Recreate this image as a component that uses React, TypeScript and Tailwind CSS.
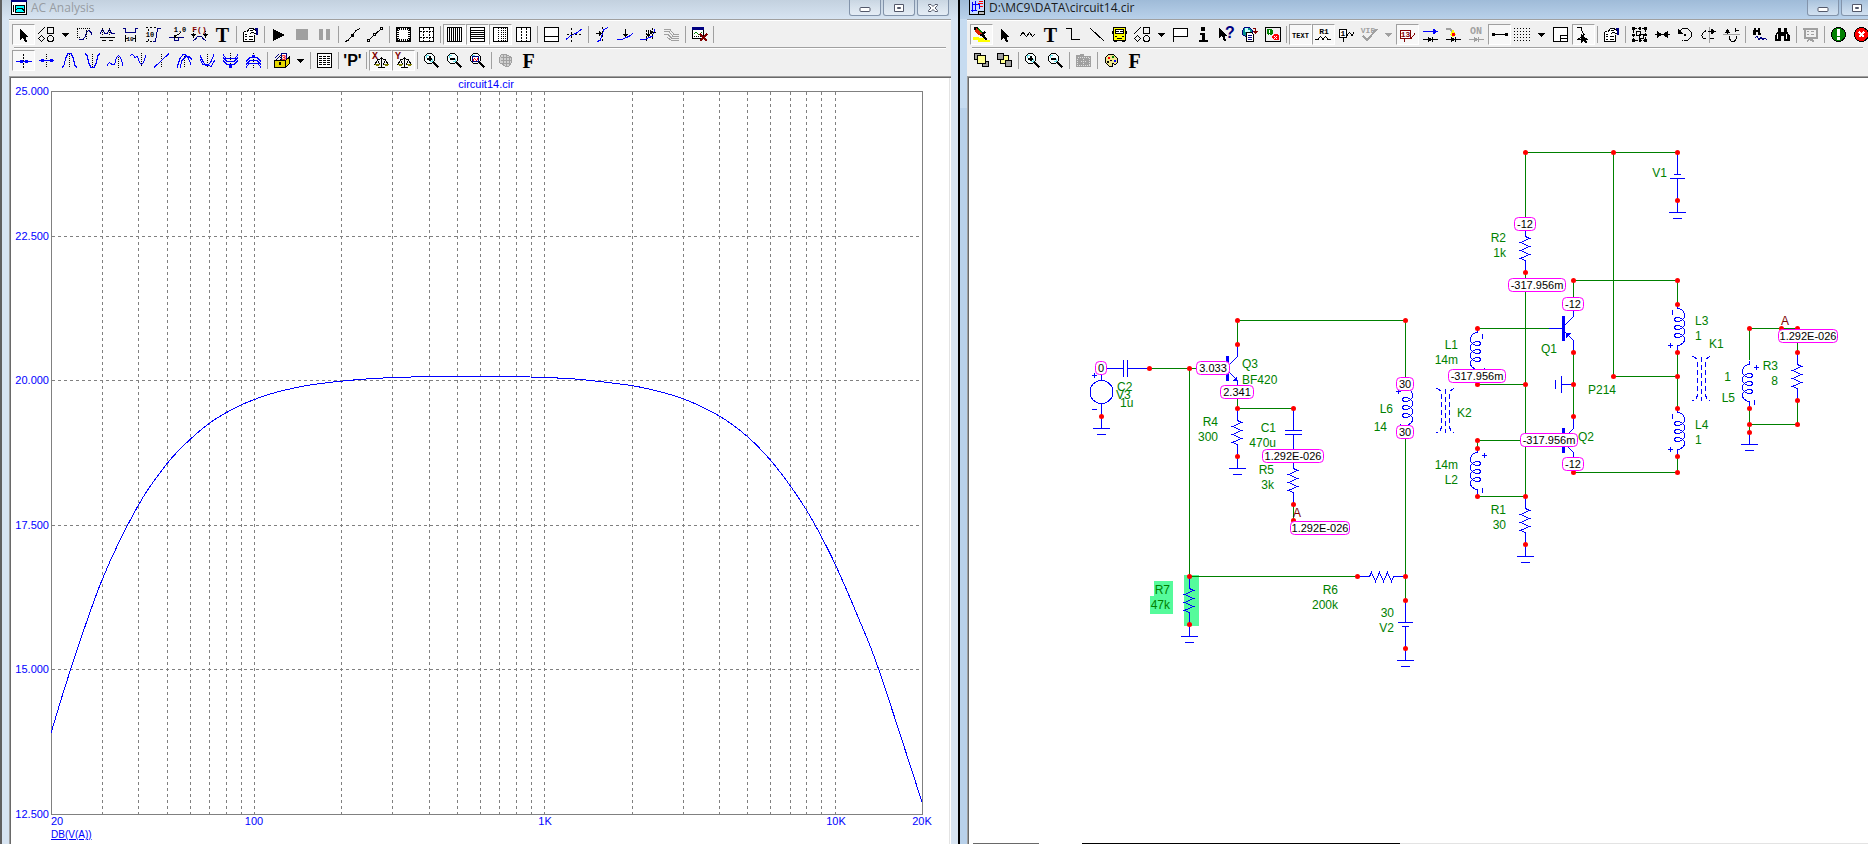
import React from 'react'

const BLUE = '#0000ff'
const NAVY = '#000080'
const GRAY = '#a0a0a0'
const RED = '#800000'
const GREEN = '#008000'

type LineProps = { d: string; c?: string; w?: number; dash?: string; fill?: string }

function L({ d, c = '#000', w = 1, dash, fill = 'none' }: LineProps) {
  return <path d={d} stroke={c} strokeWidth={w} strokeDasharray={dash} fill={fill} />
}

function F({ d, c = '#000' }: { d: string; c?: string }) {
  return <path d={d} fill={c} />
}

function Tiny({ x, y, size = 7, c = '#000', children }: { x: number; y: number; size?: number; c?: string; children: string }) {
  return (
    <text x={x} y={y} fontSize={size} fill={c} fontWeight="bold" fontFamily="'Liberation Mono', monospace" textAnchor="middle">
      {children}
    </text>
  )
}

const diode = (c: string) => (
  <>
    <L c={c} d="M1 13.5H16" />
    <F c={c} d="M6 10.5L10 13.5L6 16.5ZM10 11H11V16H10Z" />
  </>
)

const magnifier = (
  <>
    <L d="M4.5 1.5H8.5L11.5 4.5V8.5L8.5 11.5H4.5L1.5 8.5V4.5Z" fill="#f8ffff" />
    <L d="M2 4L4 2M9 2L11 4M2 9L4 11M9 11L11 9" />
    <L d="M3 3.5H6M3.5 3V6M9.5 7V10M7 9.5H10" c="#60e0e8" />
    <L d="M10.5 10.5L15.5 15.5" w={2} />
  </>
)

const clipboard = (
  <>
    <L d="M1.5 5.5V15.5H12.5V9M1.5 5.5H4" fill="#fff" />
    <L d="M3 8.5H5M7 10.5H11M3 10.5H5M3 13.5H5M7 13.5H11" />
    <L d="M4.5 6.5L7.5 2.5H10.5L14 4.5V7.5L9.5 6.5L7.5 8.5" fill="#fff" />
    <L d="M8 4.5H11M9 6.5H12" />
    <F d="M13 2H16V9H14V4H13Z" c={NAVY} />
  </>
)

const scales = (letter: string) => (
  <>
    <Tiny x={3} y={7} size={10} c={RED}>{letter}</Tiny>
    <L d="M9.5 5V15M6 15.5H13M5 8.5L9.5 6.5L14 8.5M5.5 8L3 12H7.5ZM13.5 8L11.5 12H16Z" />
    <F d="M2 12H8L6 14H4ZM11 12H17L15 14H13Z" c="#808000" />
  </>
)

const plotFrame = <L d="M1.5 1.5H15.5V15.5H1.5Z" fill="#fff" />

const icons: Record<string, React.ReactNode> = {
  arrow: <F d="M5 3V14L8 11.5L10 16H12L10.5 11H14Z" />,
  shapes: (
    <>
      <L d="M0 8L7 1M9.5 1.5H15.5V7.5H9.5ZM3.5 9.5L6.5 12.5L3.5 15.5L0.5 12.5Z" />
      <circle cx="12.5" cy="12.5" r="3" fill="none" stroke="#000" />
    </>
  ),
  scope: (
    <>
      <L d="M1 2.5H15M1.5 3V12M1 11.5H5" dash="1 1" />
      <L d="M3 13.5H7L9.5 10L11 5.5L13 4.5L15 6.5L16 9" c={NAVY} />
      <L d="M10.5 4V14" dash="1 1" />
    </>
  ),
  equals: (
    <>
      <L d="M1 8L3.5 3.5L6 7.5L8 8L10.5 3.5L12.5 7.5H16" c={NAVY} />
      <L d="M3.5 2V10M10.5 2V10" dash="1 1" />
      <L d="M1 11.5H16M3 14.5H7M10 14.5H14" />
    </>
  ),
  width: (
    <>
      <L d="M1 2.5H3.5V6.5H13.5V2.5H16" c={NAVY} />
      <L d="M3.5 9V16M13.5 9V16M4 12.5H6M11 12.5H13" />
      <Tiny x={8} y={15} size={6}>10</Tiny>
    </>
  ),
  height: (
    <>
      <L d="M8 15.5H10.5L12.5 2.5H16" c={NAVY} />
      <L d="M1 1.5H12M1 15.5H8" dash="2 2" />
      <L d="M3.5 3V5M3.5 13V15" />
      <Tiny x={5} y={11} size={7}>10</Tiny>
    </>
  ),
  slope: (
    <>
      <L d="M1 11.5H6.5V14.5H10.5V11.5H16" c={NAVY} />
      <L d="M6 11L13 6.5M6 8.5V11.5H10" />
      <Tiny x={12} y={6} size={7}>1.0</Tiny>
    </>
  ),
  func: (
    <>
      <Tiny x={8.5} y={6} size={8} c={RED}>F()</Tiny>
      <L d="M2 15L4.5 13L6.5 10.5H10.5L12.5 13L15 15" c={NAVY} />
      <L d="M2.5 5V12M14.5 5V12" dash="1 1" />
      <F d="M0 8H5L2.5 11ZM12 8H17L14.5 11Z" />
    </>
  ),
  props: clipboard,
  play: <F d="M3 3L15 9L3 15Z" />,
  stop: <F d="M3 3H15V14H3Z" c={GRAY} />,
  pause: <F d="M3 3H7V14H3ZM10 3H14V14H10Z" c={GRAY} />,
  line: (
    <>
      <L d="M1 15.5L4 14.5L12 4.5L16 2.5" />
      <F d="M7 7.5H10V10.5H7Z" />
    </>
  ),
  linePts: (
    <>
      <L d="M1.5 14.5L7.5 8.5L15 2.5" />
      <L d="M0.5 13.5H2.5V15.5H0.5ZM6.5 7.5H8.5V9.5H6.5ZM13.5 1.5H15.5V3.5H13.5Z" fill="#fff" />
    </>
  ),
  ruler: (
    <>
      <L d="M1.5 1.5H15.5V15.5H1.5Z" fill="#fff" />
      <L d="M3 2V15M14 2V15M2 3H15M2 14H15" dash="1 1" w={2} />
    </>
  ),
  plus: (
    <>
      {plotFrame}
      <L d="M5.5 2V15M11.5 2V15M2 5.5H15M2 11.5H15" dash="2 1" />
    </>
  ),
  vgrid: (
    <>
      {plotFrame}
      <L d="M3.5 2V15M5.5 2V15M7.5 2V15M9.5 2V15M11.5 2V15M13.5 2V15" />
    </>
  ),
  hgrid: (
    <>
      {plotFrame}
      <L d="M2 4.5H15M2 6.5H15M2 8.5H15M2 10.5H15M2 12.5H15" />
    </>
  ),
  minor: (
    <>
      {plotFrame}
      <L d="M6.5 2V15M9.5 2V15M11.5 2V15M13.5 2V15" dash="1 1" />
    </>
  ),
  thirds: (
    <>
      {plotFrame}
      <L d="M6.5 2V15M11.5 2V15" dash="2 1" />
    </>
  ),
  panes: (
    <>
      {plotFrame}
      <L d="M2 10.5H15" />
    </>
  ),
  tangent: (
    <>
      <L d="M0 13.5L6 8.5L10 7.5L16 3" c={BLUE} />
      <L d="M5.5 2V16M1 8.5H16" dash="2 2" />
    </>
  ),
  goX: (
    <>
      <L d="M3 15.5L6 14.5L10 3.5L14 1.5" c={BLUE} />
      <L d="M8.5 1V16" dash="2 2" />
      <L d="M2 7.5H8" />
      <F d="M5 5V10L8 7.5Z" />
    </>
  ),
  goY: (
    <>
      <L d="M0 13.5H5L9 11.5L12 10.5L16 7.5" c={BLUE} />
      <L d="M8.5 3V10" />
      <F d="M5.5 7.5H11.5L8.5 11Z" />
    </>
  ),
  goXY: (
    <>
      <L d="M0 13.5H5L9 11.5L12 10.5L15 3.5" c={BLUE} />
      <L d="M6.5 4V16M12.5 2V14" dash="2 1" />
      <L d="M8.5 4V10M10 6.5H16" />
      <F d="M5.5 7.5H11.5L8.5 11ZM10 4V9L13 6.5Z" />
    </>
  ),
  waves: <L c={GRAY} d="M1 3.5H7L11 8.5H16M1 5.5H6L10 10.5H16M1 8.5H5L9 12.5H16M4 11.5L9 14.5H16" />,
  noPlot: (
    <>
      <L d="M1.5 2.5H12.5V12.5H1.5Z" fill="#fff" />
      <F d="M1 1H13V4H1Z" c={NAVY} />
      <L d="M3 8L5 6L8 9L11 6" c={GREEN} />
      <L d="M3 10.5H10" c="#000" dash="1 1" />
      <L d="M9 8L16 15M16 8L9 15" c={RED} w={2} />
    </>
  ),
  cursors: (
    <>
      <L d="M8.5 2V17" dash="2 1" />
      <L d="M1 9.5H17" c={BLUE} w={1} />
      <F d="M5 8H8V11H5ZM10 8H13V11H10Z" c={BLUE} />
    </>
  ),
  nextPt: (
    <>
      <L d="M8.5 2V15" dash="1 1" />
      <L d="M1 8.5H16" c={BLUE} />
      <F d="M3 7H6V10H3ZM12 7H15V10H12Z" c={BLUE} />
    </>
  ),
  peak: (
    <>
      <L d="M8.5 2V16" dash="1 1" />
      <L d="M1 15.5L3 13.5L5 5.5L7 1.5H10L12 5.5L14 13.5L16 15.5" c={BLUE} />
    </>
  ),
  valley: (
    <>
      <L d="M8.5 2V16" dash="1 1" />
      <L d="M1 1.5L3 3.5L5 11.5L7 15.5H10L12 11.5L14 3.5L16 1.5" c={BLUE} />
    </>
  ),
  high: (
    <>
      <L d="M11.5 3V16" dash="1 1" />
      <L d="M0 13.5L2.5 10.5L5 12.5H7.5L9.5 5.5L11.5 3.5L13.5 5.5L16 13.5" c={BLUE} />
    </>
  ),
  low: (
    <>
      <L d="M11.5 1V14" dash="1 1" />
      <L d="M0 3.5L2.5 2.5L5 5.5L7.5 4.5L9.5 10.5L11.5 12.5L13.5 10.5L16 3.5" c={BLUE} />
    </>
  ),
  inflect: (
    <>
      <L d="M8.5 2V16" dash="1 1" />
      <L d="M1 15.5L8 9L16 1.5" c={BLUE} />
    </>
  ),
  topTwo: (
    <>
      <L d="M8.5 2V16" dash="1 1" />
      <L d="M1 15.5L4 6.5L7 2.5H9L12 5.5L15 12.5M4 15.5L6 8.5L10 4.5H13L16 7.5" c={BLUE} />
    </>
  ),
  botTwo: (
    <>
      <L d="M8.5 2V16" dash="1 1" />
      <L d="M1 3.5L4 9.5L7 13.5H9L12 9.5L15 2.5M1 7.5L4 12.5H9L12 14.5L16 8" c={BLUE} />
    </>
  ),
  nestDown: (
    <>
      <L d="M8.5 1V16" dash="1 1" />
      <L d="M1 2.5L4 6.5H13L16 2.5M1 5.5L5 9.5H12L16 5.5M1 8.5L5 12.5H12L16 8.5" c={BLUE} />
      <F d="M7 12H10V16H7Z" c={BLUE} />
    </>
  ),
  nestUp: (
    <>
      <L d="M8.5 1V16" dash="1 1" />
      <L d="M1 15.5L4 11.5H13L16 15.5M1 12.5L5 8.5H12L16 12.5M1 9.5L5 5.5H12L16 9.5" c={BLUE} />
      <F d="M7 3H10V6H7Z" c={BLUE} />
    </>
  ),
  box: (
    <>
      <L d="M8.5 1.5H13.5V8.5H8.5Z" c={NAVY} fill="#fff" />
      <Tiny x={11} y={8} size={8} c="#ff0000">3</Tiny>
      <L d="M2 6L6 2M4 7L8 3" c={NAVY} />
      <L d="M1.5 8.5H12.5V15.5H1.5ZM12.5 8.5L16 5.5V12L12.5 15.5" fill="#e6d800" />
      <L d="M3 7.5L7 4L8 8" c="#000" dash="1 1" />
      <F d="M6 10H8V13H6Z" />
    </>
  ),
  table: (
    <>
      <L d="M1.5 1.5H15.5V15.5H1.5Z" fill="#fff" />
      <L d="M3 4.5H14M3 6.5H14M3 8.5H14M3 10.5H14M3 12.5H14" dash="3 1" />
    </>
  ),
  scaleX: scales('X'),
  scaleY: scales('Y'),
  zoomIn: (
    <>
      {magnifier}
      <L d="M4 6.5H9M6.5 4V9" w={2} />
    </>
  ),
  zoomOut: (
    <>
      {magnifier}
      <L d="M4 6.5H9" w={2} />
    </>
  ),
  zoomPlot: (
    <>
      {magnifier}
      <L d="M3.5 4.5H9.5V9.5H3.5Z" c={NAVY} />
      <L d="M4 8.5L5.5 6.5L7.5 8.5L9 6.5" c="#ff0000" />
    </>
  ),
  globe: (
    <>
      <L d="M4.5 2.5H9.5L14.5 5.5V10.5L11.5 14.5H8.5L2.5 10.5V5.5Z" c={GRAY} fill="#d0d0d0" />
      <L d="M4 5.5H14M4 8.5H15M5 11.5H14M6.5 3V13M9.5 3V14M12.5 4V14" c={GRAY} />
    </>
  ),
  pen: (
    <>
      <F d="M0 11H6V12H11V14H17V16H5V14H0Z" c="#ffff00" />
      <F d="M1 1H4L11 8L14 13L8 10L1 4Z" />
      <L d="M3 2.5L9 8.5M2 4.5L7 8.5" c="#e02000" w={2} />
      <L d="M5 2.5L9 6.5" c={GREEN} />
      <L d="M8 10L12 6M11 11L14 14" w={2} />
    </>
  ),
  wave: <L d="M1 10L4 6.5L7.5 10.5L10.5 6.5L13.5 10.5L16 8" />,
  ortho: <L d="M1 2.5H6.5V13.5H15" />,
  diag: <L d="M2 2L16 15" />,
  bus: (
    <>
      <L d="M2.5 1.5H14.5V14.5H2.5Z" fill="#ffff00" w={1} />
      <L d="M4.5 3.5H12.5V7.5H4.5Z" fill="#fff" />
      <F d="M5 5H8V6H5ZM9 5H12V6H9ZM1 5H2V8H1ZM15 5H16V8H15ZM3 15H6V16H3ZM11 15H14V16H11Z" />
      <L d="M4 10.5H6M11 10.5H13M6 12.5H11" />
    </>
  ),
  flag: <L d="M1.5 16V2.5H15.5V10.5H2" w={1} fill="#fff" />,
  info: <F d="M6 1H10V5H6ZM5 7H10V14H13V16H4V14H7V9H5Z" />,
  help: (
    <>
      <F d="M1 2V12L4 10L6 15H8L6.5 9.5H9Z" />
      <text x="12" y="12" fontSize="16" fontWeight="bold" fill={NAVY} textAnchor="middle" fontFamily="'Liberation Sans', sans-serif">?</text>
    </>
  ),
  web: (
    <>
      <L d="M3.5 1.5H8.5L11.5 4.5V7.5L6.5 11.5L1.5 8.5V4.5Z" c={NAVY} fill="#009090" />
      <F d="M4 2H7V4H9V6H4Z" c="#c0ffff" />
      <L d="M5.5 6.5H10.5L12.5 8.5V15.5H5.5Z" fill="#fff" />
      <L d="M7 9.5H11M7 11.5H11M7 13.5H11" c={NAVY} />
      <L d="M12 2.5H14.5V6" c={RED} />
      <F d="M12 5H17L14.5 8Z" c={RED} />
    </>
  ),
  status: (
    <>
      <L d="M1.5 1.5H16.5V15.5H1.5Z" fill="#f0f0f0" />
      <F d="M3 3H7L9 4V8L7 9H4L3 8Z" c={GREEN} />
      <F d="M10 8H14L15 10V13L14 14H10L8 12V10Z" c="#ff0000" />
      <L d="M10 10L13 13M13 10L10 13" c="#fff" />
      <F d="M5 4H6V7H5ZM5 8H6V9H5Z" c="#fff" />
    </>
  ),
  text: <Tiny x={8.5} y={12} size={7}>TEXT</Tiny>,
  r1: (
    <>
      <Tiny x={9} y={8} size={8}>R1</Tiny>
      <L d="M0 13.5H3L5.5 10.5L8 13.5L10.5 10.5L13 13.5H16" />
    </>
  ),
  nodeNum: (
    <>
      <L d="M1.5 3.5H8.5V11.5H1.5ZM5.5 12V16M9 9.5L11.5 6.5L14 9.5L16 6.5" fill="#fff" />
      <Tiny x={5} y={10} size={8}>1</Tiny>
    </>
  ),
  vip: (
    <>
      <Tiny x={7} y={7} size={8} c={GRAY}>VIP</Tiny>
      <L d="M2 10L6 14L16 3" c={GRAY} w={2} />
    </>
  ),
  volts: (
    <>
      <L d="M1.5 4.5H11.5V12.5H1.5ZM5.5 13V16M12 12.5L16 7.5" c={RED} fill="#fff" />
      <Tiny x={6.5} y={11} size={8} c={RED}>13</Tiny>
    </>
  ),
  current: (
    <>
      <L d="M1 5.5H15" c={BLUE} />
      <F d="M11 2.5L15.5 5.5L11 8.5Z" c={BLUE} />
      {diode('#000')}
    </>
  ),
  power: (
    <>
      <L d="M1 2.5H5L7 6" c={GRAY} w={2} />
      <F d="M5 9L8 3L11 9L8 11Z" c="#ffff00" />
      <F d="M7 7H10V10H7Z" c="#ff0000" />
      {diode('#000')}
    </>
  ),
  cond: (
    <>
      <Tiny x={8} y={8} size={10} c={GRAY}>ON</Tiny>
      {diode(GRAY)}
    </>
  ),
  pins: (
    <>
      <L d="M2 8.5H15" w={1} />
      <F d="M1 7H4V10H1ZM14 7H17V10H14Z" />
    </>
  ),
  dots: <L d="M0 2.5H17M0 5.5H17M0 8.5H17M0 11.5H17M0 14.5H17" dash="1 2" />,
  border: <L d="M1.5 1.5H15.5V15.5H1.5ZM8.5 15.5V9.5H15.5M9 12.5H15" fill="#fff" />,
  rubber: (
    <>
      <L d="M2 1.5H6.5V4.5L9 8.5L3 13.5H8" />
      <F d="M6 8V17L8 15L10 17H12L11 13.5H13Z" />
    </>
  ),
  group: (
    <>
      <L d="M2.5 2.5H14.5V14.5H2.5Z" dash="3 1" />
      <L d="M5.5 5.5H9.5V9.5H5.5ZM8.5 8.5H12.5V12.5H8.5Z" w={1} />
      <F d="M1 1H4V4H1ZM13 1H16V4H13ZM1 13H4V16H1ZM13 13H16V16H13ZM8 1H10V4H8ZM8 13H10V16H8ZM1 8H4V10H1ZM13 8H16V10H13Z" />
    </>
  ),
  mirror: <F d="M1 8H3V5L8 8H9L14 5V8H16V9H14V12L9 9H8L3 12V9H1Z" />,
  rotate: (
    <>
      <L d="M2.5 6L5.5 2.5H10.5L14.5 6.5V10.5L10.5 14.5H6.5" />
      <F d="M1 3V8H6ZM7 8H9V10H7Z" />
      <L d="M6 14.5L3 12" dash="1 1" />
    </>
  ),
  flipX: (
    <>
      <L d="M9.5 1V17" c={GRAY} />
      <L d="M6 4.5L3.5 6.5L1.5 9.5L3.5 12.5H6M10 12.5H14M8 5.5H13" />
      <F d="M11 2.5L16 5.5L11 8.5Z" />
    </>
  ),
  flipY: (
    <>
      <L d="M0 8.5H17" c={GRAY} />
      <L d="M6.5 10V13L8.5 15.5H11.5L13.5 12V10M4.5 4V8M12.5 2V5L16 4" />
      <F d="M2 6.5L4.5 2.5L7 6.5Z" />
    </>
  ),
  find: (
    <>
      <F d="M3 2H5V4H7V2H9V4L10 9H7V6H5V9H2V6Z" />
      <L d="M4 12L6 10.5L8 13.5L10 11.5L12 13.5L14 12L16 14" c={NAVY} />
    </>
  ),
  binoculars: (
    <>
      <F d="M4 2H7V6H10V2H13V5L16 10V15H10V10H7V15H1V10L4 5Z" />
      <L d="M3.5 8V13M12.5 8V13" c="#fff" />
    </>
  ),
  board: (
    <>
      <L d="M1 2.5H16M2.5 3V11.5H14.5V3M8.5 12V15M5 15.5L8 12.5L12 15.5" c={GRAY} w={2} />
      <L d="M5 5.5H7M9 5.5H12M5 8.5H7M9 8.5H12" c={GRAY} />
    </>
  ),
  ok: (
    <>
      <circle cx="8.5" cy="8.5" r="7" fill="#008000" stroke="#000" />
      <F d="M7 3H10V10H7ZM7 11H10V14H7Z" c="#fff" />
    </>
  ),
  bad: (
    <>
      <circle cx="8.5" cy="8.5" r="7" fill="#ff0000" stroke="#000" />
      <L d="M6 6L11 11M11 6L6 11" c="#fff" w={2} />
    </>
  ),
  front: (
    <>
      <L d="M1.5 1.5H7.5V7.5H1.5ZM9.5 9.5H15.5V14.5H9.5Z" fill={GRAY} />
      <L d="M4.5 3.5H12.5V11.5H4.5Z" fill="#ffff90" />
    </>
  ),
  back: (
    <>
      <L d="M4.5 3.5H12.5V11.5H4.5Z" fill="#ffff90" />
      <L d="M1.5 1.5H7.5V7.5H1.5ZM9.5 8.5H15.5V14.5H9.5Z" fill={GRAY} />
    </>
  ),
  camera: (
    <>
      <F d="M1 3H5V2H9V4H16V15H1Z" c={GRAY} />
      <L d="M2.5 5.5H14.5V13.5H2.5ZM6 9.5H11M8.5 7V12" c="#e0e0e0" dash="1 1" />
    </>
  ),
  palette: (
    <>
      <L d="M5.5 2.5H10.5L14.5 6.5V10.5L12.5 12.5L9.5 11.5V14.5H6.5L2.5 10.5V5.5Z" fill="#f0e890" w={1} />
      <F d="M5 5H7V7H5Z" c="#ff0000" />
      <F d="M9 4H11V6H9Z" c={GREEN} />
      <F d="M11 8H13V10H11Z" c={BLUE} />
      <F d="M4 9H6V11H4ZM7 8H9V9H7Z" />
    </>
  ),
}

const glyphs: Record<string, React.ReactNode> = {
  T: <span className="font-['Liberation_Serif',serif] text-[20px] leading-[20px] font-bold">T</span>,
  F: <span className="font-['Liberation_Serif',serif] text-[20px] leading-[20px] font-bold">F</span>,
  P: <span className="font-['Liberation_Sans',sans-serif] text-[16px] leading-[20px] font-bold">'P'</span>,
}

// "|" is a separator, "v" / "v-" a drop-down arrow, a leading "*" a pressed button
const analysisTop = '*arrow shapes v scope equals width height slope func T | props | play stop pause | line linePts | ruler plus | *vgrid *hgrid *minor thirds | panes tangent | goX goY goXY waves | noPlot |'
const analysisBottom = '*cursors nextPt peak valley high low inflect topTwo botTwo nestDown nestUp | box v | table | P | *scaleX *scaleY | zoomIn zoomOut zoomPlot | globe F'
const schemTop = '*pen arrow wave T ortho diag bus shapes v flag info help web status | *text *r1 nodeNum vip v- *volts current power cond *pins dots v border *rubber | props | group mirror rotate flipX flipY | find binoculars | board | ok bad'
const schemBottom = 'front back | zoomIn zoomOut | camera | palette F'

function Toolbar({ items, label }: { items: string; label: string }) {
  return (
    <div role="toolbar" aria-label={label} className="flex h-[21px] items-center overflow-hidden pl-[3px]">
      {items.split(' ').map((item, i) => {
        if (item === '|') {
          return <div key={i} className="mx-[2px] h-[17px] w-px shrink-0 bg-[#a0a0a0]" />
        }
        if (item[0] === 'v' && item.length < 3) {
          return (
            <button key={i} aria-label="More" className="flex h-[21px] w-[15px] shrink-0 items-center justify-center">
              <svg width="7" height="4" shapeRendering="crispEdges">
                <path d="M0 0H7L3.5 4Z" fill={item === 'v' ? '#000' : GRAY} />
              </svg>
            </button>
          )
        }
        const on = item[0] === '*'
        const name = on ? item.slice(1) : item
        return (
          <button
            key={i}
            aria-label={name}
            aria-pressed={on}
            className={
              on
                ? 'flex h-[21px] w-[23px] shrink-0 items-center justify-center border border-t-[#a0a0a0] border-r-white border-b-white border-l-[#a0a0a0] bg-[#f8f8f8]'
                : 'flex h-[21px] w-[23px] shrink-0 items-center justify-center'
            }
          >
            {glyphs[name] ?? (
              <svg width="17" height="17" viewBox="0 0 17 17" shapeRendering="crispEdges" className="shrink-0 overflow-visible">
                {icons[name]}
              </svg>
            )}
          </button>
        )
      })}
    </div>
  )
}

function CaptionButton({ kind }: { kind: 'min' | 'max' | 'close' }) {
  return (
    <button
      aria-label={kind}
      className="flex h-4 w-8 items-center justify-center rounded-b-[3px] border border-t-0 border-[#8394ab] bg-linear-to-b from-white/10 to-white/40 pt-px"
    >
      <svg width="12" height="10" viewBox="0 0 12 10" fill="#fff" stroke="#53586a">
        {kind === 'min' && <rect x="1" y="4.5" width="10" height="4" rx="1" />}
        {kind === 'max' && <path d="M1.5 1.5H10.5V8.5H1.5ZM4.5 4.5H7.5V5.5H4.5Z" fillRule="evenodd" />}
        {kind === 'close' && <path d="M1.5 1.5H4L6 3.5L8 1.5H10.5V2.5L8 5L10.5 7.5V8.5H8L6 6.5L4 8.5H1.5V7.5L4 5L1.5 2.5Z" />}
      </svg>
    </button>
  )
}

function Client({ top, bottom, children }: { top: string; bottom: string; children: React.ReactNode }) {
  return (
    <div className="flex min-h-0 min-w-0 flex-1 flex-col border-t border-[#a0a0a0] bg-[#f0f0f0]">
      <div className="h-px shrink-0 bg-white" />
      <div className="pt-[3px] pb-[2px]">
        <Toolbar items={top} label="Main tools" />
      </div>
      <div className="mx-[5px] h-[2px] shrink-0 border-t border-[#a0a0a0] bg-white" />
      <div className="pt-px pb-[5px]">
        <Toolbar items={bottom} label="View tools" />
      </div>
      <div className="min-h-0 flex-1 border-t border-l border-[#a0a0a0] bg-white">
        <div className="h-full overflow-hidden border-t border-l border-[#696969]">{children}</div>
      </div>
    </div>
  )
}

// ---- AC analysis plot ----

const plot = { x0: 51.5, x1: 922.5, y0: 91.5, y1: 814.5 }
const decade = (plot.x1 - plot.x0) / 3
const freqX = (f: number) => Math.round(plot.x0 + Math.log10(f / 20) * decade - 0.5) + 0.5

const freqs = [1, 10, 100, 1000, 10000].flatMap((m) => [1, 2, 3, 4, 5, 6, 7, 8, 9].map((n) => n * m)).filter((f) => f > 20 && f < 20000)

const response = [
  [51, 733], [70.7, 669.3], [102.3, 579.3], [138.3, 505.3], [167.3, 463.3], [190.3, 439.2], [209.3, 423.3],
  [226.3, 412.6], [241.3, 404.9], [254.3, 399.5], [273.3, 393.1], [300, 386.8], [318.3, 383.8], [341.7, 381.1],
  [367.7, 378.9], [392.7, 377.6], [430, 376.6], [480, 376.4], [530, 377], [572, 378.8], [597, 381.2], [632.3, 385.7],
  [652, 389.8], [683.3, 398.8], [719.3, 416], [747.3, 436.5], [770.3, 460], [790.3, 485.8], [806.3, 509.8],
  [821.3, 536.5], [835.3, 564.5], [857.7, 616.2], [878.7, 669.4], [922, 802],
]

// Catmull-Rom spline through the samples
const responsePath = response.slice(0, -1).reduce((d, p1, i) => {
  const p0 = response[i - 1] ?? p1
  const p2 = response[i + 1]
  const p3 = response[i + 2] ?? p2
  const c1 = [p1[0] + (p2[0] - p0[0]) / 6, p1[1] + (p2[1] - p0[1]) / 6]
  const c2 = [p2[0] - (p3[0] - p1[0]) / 6, p2[1] - (p3[1] - p1[1]) / 6]
  return `${d}C${c1} ${c2} ${p2}`
}, `M${response[0]}`)

function Plot() {
  return (
    <svg viewBox="11 78 938 766" className="block h-auto w-full font-['Liberation_Sans',sans-serif] text-[11px]" fill={BLUE}>
      <g stroke="#808080" fill="none" shapeRendering="crispEdges">
        {freqs.map((f) => (
          <path key={f} d={`M${freqX(f)} 92V814`} strokeDasharray="3 3" />
        ))}
        {[22.5, 20, 17.5, 15].map((v) => {
          const y = Math.round(plot.y1 - ((v - 12.5) / 12.5) * 723 - 0.5) + 0.5
          return <path key={v} d={`M52 ${y}H922`} strokeDasharray="3 3" />
        })}
        <path d={`M${plot.x0} ${plot.y0}H${plot.x1}V${plot.y1}H${plot.x0}Z`} />
        <path d={responsePath} stroke={BLUE} />
      </g>
      <text x="486" y="88" textAnchor="middle">circuit14.cir</text>
      {[25, 22.5, 20, 17.5, 15, 12.5].map((v) => (
        <text key={v} x="49" y={Math.round(95 + ((25 - v) / 12.5) * 723)} textAnchor="end">
          {v.toFixed(3)}
        </text>
      ))}
      <text x="51" y="825">20</text>
      <text x="254" y="825" textAnchor="middle">100</text>
      <text x="545" y="825" textAnchor="middle">1K</text>
      <text x="836" y="825" textAnchor="middle">10K</text>
      <text x="922" y="825" textAnchor="middle">20K</text>
      <text x="51" y="838" className="text-[10px] underline">DB(V(A))</text>
    </svg>
  )
}

// ---- schematic ----

type XY = [number, number]

const wires = [
  'M1150 368.5H1197', 'M1189.5 368V576.5H1357', 'M1237.5 344V320.5H1405.5V378', 'M1405.5 438V600',
  'M1237.5 398V408.5H1293.5', 'M1293.5 504V522', 'M1525.5 224V152.5H1677.5', 'M1525.5 272V496.5H1477',
  'M1613.5 152V376.5H1677.5', 'M1573.5 298V280.5H1677.5V304', 'M1477 328.5H1549', 'M1477.5 376V384.5H1525.5',
  'M1573.5 352V416', 'M1677.5 352V408', 'M1677.5 456V472.5H1573.5', 'M1521 440.5H1477.5V448',
  'M1749.5 360V328.5H1797.5V352', 'M1797.5 400V424.5H1749.5', 'M1749.5 408V432',
]

const dots: XY[] = [
  [1101, 416], [1149, 368], [1189, 368], [1237, 320], [1237, 344], [1405, 320], [1237, 408], [1293, 408], [1237, 456],
  [1293, 504], [1293, 520], [1189, 576], [1189, 624], [1357, 576], [1405, 576], [1405, 600], [1405, 648],
  [1525, 152], [1613, 152], [1677, 152], [1677, 200], [1525, 272], [1573, 280], [1677, 280], [1677, 304],
  [1477, 328], [1573, 352], [1677, 352], [1613, 376], [1677, 376], [1477, 384], [1525, 384], [1573, 384],
  [1677, 408], [1573, 416], [1477, 440], [1477, 448], [1677, 456], [1573, 472], [1677, 472], [1477, 496],
  [1525, 496], [1525, 544], [1749, 328], [1781, 328], [1797, 328], [1797, 352], [1797, 400], [1749, 408],
  [1749, 424], [1797, 424], [1749, 432],
]

const grounds: XY[] = [[1101, 416], [1237, 456], [1189, 624], [1405, 648], [1677, 200], [1525, 544], [1749, 432]]
const resistors: XY[] = [[1237, 408], [1293, 456], [1189, 576], [1525, 224], [1525, 496], [1797, 352]]
const coils: [number, number, number][] = [[1677, 304, 1], [1677, 408, 1], [1405, 384, 1], [1477, 328, -1], [1477, 448, -1], [1749, 360, -1]]
const cores: XY[] = [[1701, 356], [1445, 388]]
const pluses: XY[] = [[1094, 375], [1398, 391], [1670, 345], [1670, 449], [1484, 455], [1756, 367]]
const minuses: XY[] = [[1672, 309], [1672, 413], [1482, 333], [1482, 487], [1754, 399], [1484, 367], [1400, 423]]

const zigzag = 'M0 0V12L4 14L-5 18L4 22L-5 26L4 30L-5 34L0 36V48'
const coil =
  'M0 0V4H1C5 5 7 8 7 11C7 15 3 17 0 17C-4 17 -4 13 0 13C4 13 7 16 7 19C7 23 3 25 0 25C-4 25 -4 21 0 21C4 21 7 24 7 27C7 31 3 33 0 33C-4 33 -4 29 0 29C4 29 7 32 7 35C7 39 4 40 1 41H0V48'

const labels: [string, number, number, ('end' | 'start')?][] = [
  ['Q3', 1242, 368], ['BF420', 1242, 384], ['C2', 1117, 391], ['V3', 1116, 399], ['1u', 1120, 407],
  ['R4', 1218, 426, 'end'], ['300', 1218, 441, 'end'], ['C1', 1276, 432, 'end'], ['470u', 1276, 447, 'end'],
  ['R5', 1274, 474, 'end'], ['3k', 1274, 489, 'end'], ['R7', 1170, 594, 'end'], ['47k', 1170, 609, 'end'],
  ['R6', 1338, 594, 'end'], ['200k', 1338, 609, 'end'], ['30', 1394, 617, 'end'], ['V2', 1394, 632, 'end'],
  ['L6', 1393, 413, 'end'], ['14', 1387, 431, 'end'], ['V1', 1667, 177, 'end'], ['R2', 1506, 242, 'end'],
  ['1k', 1506, 257, 'end'], ['Q1', 1541, 353], ['L1', 1458, 349, 'end'], ['14m', 1458, 364, 'end'],
  ['K2', 1457, 417], ['P214', 1588, 394], ['Q2', 1578, 441], ['14m', 1458, 469, 'end'], ['L2', 1458, 484, 'end'],
  ['R1', 1506, 514, 'end'], ['30', 1506, 529, 'end'], ['L3', 1695, 325], ['1', 1695, 340], ['K1', 1709, 348],
  ['L4', 1695, 429], ['1', 1695, 444], ['1', 1731, 381, 'end'], ['L5', 1735, 402, 'end'], ['R3', 1778, 370, 'end'],
  ['8', 1778, 385, 'end'],
]

const volts: [string, number, number, number][] = [
  ['0', 1095, 361, 11], ['3.033', 1196, 361, 33], ['2.341', 1220, 385, 33], ['30', 1396, 377, 17], ['30', 1396, 425, 17],
  ['1.292E-026', 1262, 449, 61], ['1.292E-026', 1290, 521, 59], ['-12', 1514, 217, 21], ['-317.956m', 1508, 278, 57],
  ['-12', 1562, 297, 21], ['-317.956m', 1448, 369, 57], ['-317.956m', 1520, 433, 57], ['-12', 1562, 457, 21],
  ['1.292E-026', 1778, 329, 59],
]

const at = (x: number, y: number) => `translate(${x + 0.5} ${y + 0.5})`

function Schematic() {
  return (
    <svg viewBox="969 78 899 765" className="block h-auto w-full font-['Liberation_Sans',sans-serif]">
      <path d="M1184 575H1199V626H1184ZM1154 581H1173V614H1150V596H1154Z" fill="#55fb9b" />
      <g fill="none" stroke={GREEN} shapeRendering="crispEdges">
        {wires.map((d) => <path key={d} d={d} />)}
      </g>

      <g fill="none" stroke={BLUE} shapeRendering="crispEdges">
        {grounds.map(([x, y], i) => <path key={i} transform={at(x, y)} d="M0 0V12M-8.5 12H8.5M-4.5 18H4.5" />)}
        {resistors.map(([x, y], i) => <path key={i} transform={at(x, y)} d={zigzag} />)}
        <path transform={`${at(1357, 576)} rotate(-90)`} d={zigzag} />
        {coils.map(([x, y, side], i) => <path key={i} transform={`${at(x, y)} scale(${side} 1)`} d={coil} />)}
        {cores.map(([x, y], i) => (
          <path key={i} transform={at(x, y)} strokeDasharray="5 3" d="M0 0V44M-9 0L-6 1L-4 5V39L-6 43L-9 44M9 0L6 1L4 5V39L6 43L9 44" />
        ))}
        {pluses.map(([x, y], i) => <path key={i} transform={at(x, y)} d="M-2.5 0H2.5M0 -2.5V2.5" />)}
        {minuses.map(([x, y], i) => <path key={i} transform={at(x, y)} d="M0 0V5" />)}
        {/* C2 and the V3 source */}
        <path d="M1102 368.5H1123.5M1123.5 360V377M1127.5 360V377M1127.5 368.5H1149M1101.5 375V380M1101.5 403V416M1092 409.5H1097" />
        <circle cx="1101.5" cy="392" r="11.5" />
        {/* C1 */}
        <path d="M1293.5 408V430.5M1285 430.5H1302M1285 434.5H1302M1293.5 434V456" />
        {/* batteries */}
        <path d="M1677.5 152V174.5M1674 174.5H1681M1670 178.5H1685M1677.5 178V200" />
        <path d="M1405.5 600V622.5M1398 622.5H1413M1402 626.5H1409M1405.5 626V648" />
        {/* transistors */}
        <path d="M1237.5 344V356.5L1229 365M1229 372L1237.5 380.5V392" />
        <path d="M1549 328.5H1562M1573.5 304V316.5L1565 325M1565 332L1573.5 340.5V352" />
        <path d="M1573.5 416V428.5L1565 437M1565 444L1573.5 452.5V472" />
        <path d="M1561 384.5H1573M1561.5 376V393M1555.5 380V389" />
        <path d="M1227.5 356V381M1563.5 316V341M1563.5 428V453" strokeWidth="3" />
        <path d="M1237 376V381H1232ZM1566 338V333H1571ZM1566 438V433H1571Z" fill={BLUE} stroke="none" />
      </g>

      <g className="text-[12px]" fill={GREEN}>
        {labels.map(([t, x, y, anchor], i) => (
          <text key={i} x={x} y={y} textAnchor={anchor}>{t}</text>
        ))}
      </g>
      <g fill="#ff0000">
        {dots.map(([x, y], i) => <circle key={i} cx={x + 0.5} cy={y + 0.5} r="2.5" />)}
      </g>
      <g className="text-[12px]" fill={RED}>
        <text x="1293" y="517">A</text>
        <text x="1781" y="325">A</text>
      </g>
      <g className="text-[11px]">
        {volts.map(([t, x, y, w], i) => (
          <g key={i}>
            <rect x={x + 0.5} y={y + 0.5} width={w} height="13" rx="4" fill="#fff" stroke="#ff00ff" />
            <text x={x + 0.5 + w / 2} y={y + 11} textAnchor="middle" fill="#000">{t}</text>
          </g>
        ))}
      </g>
    </svg>
  )
}

export default function App() {
  return (
    <main className="grid h-screen grid-cols-[960fr_908fr] overflow-hidden bg-white font-['Open_Sans',sans-serif]">
      <section className="flex min-w-0 flex-col overflow-hidden border-r-2 border-l-2 border-r-black border-l-[#606060] bg-[#d7e4f2]">
        <header className="flex h-[19px] shrink-0 items-start bg-linear-to-b from-[#c3d1df] to-[#d7e4f2] pl-[9px]">
          <svg width="16" height="15" viewBox="0 0 16 15" shapeRendering="crispEdges">
            <path d="M0.5 0V14.5H15.5V0" fill="#fff" stroke="#000" />
            <path d="M0 0H16V2H0Z" fill={NAVY} />
            <path d="M4.5 5.5H13.5V12.5H4.5Z" fill="#00ffff" stroke="#000" />
            <path d="M5 10L7 8.5H11L13 10.5M2.5 5V12" fill="none" stroke="#000" />
          </svg>
          <h1 className="pl-1 text-[12px] leading-4 text-[#979ca2]">AC Analysis</h1>
          <div className="mr-[9px] ml-auto flex gap-[2px]">
            <CaptionButton kind="min" />
            <CaptionButton kind="max" />
            <CaptionButton kind="close" />
          </div>
        </header>
        <div className="mr-[7px] ml-[7px] flex min-h-0 flex-1">
          <Client top={analysisTop} bottom={analysisBottom}>
            <div className="mr-[2px] h-full outline outline-[#e3e3e3]">
              <Plot />
            </div>
          </Client>
        </div>
      </section>

      <section className="flex min-w-0 flex-col overflow-hidden bg-[linear-gradient(#c6dbf0_108px,#b9d1ea_108px)]">
        <header className="flex h-[19px] shrink-0 items-start bg-linear-to-b from-[#9fbbd8] to-[#b9d1ea] pl-[9px]">
          <svg width="16" height="15" viewBox="0 0 16 15" shapeRendering="crispEdges">
            <path d="M0.5 0V14.5H15.5V0" fill="#c8dcff" stroke="#000" />
            <path d="M3.5 2V12M6.5 1V10M3 4.5H10M2 10.5H8M10.5 3V9" fill="none" stroke={BLUE} />
            <path d="M9 3.5H14M11 6.5H14M10 1.5H14" fill="none" stroke="#ff0000" />
            <path d="M9.5 11.5H15V14.5H9.5Z" fill="#c0c0c0" stroke="#000" />
          </svg>
          <h1 className="pl-1 text-[12px] leading-4 text-[#1a1a1a]">D:\MC9\DATA\circuit14.cir</h1>
          <div className="-mr-[5px] ml-auto flex gap-[2px]">
            <CaptionButton kind="min" />
            <CaptionButton kind="max" />
          </div>
        </header>
        <div className="ml-[7px] flex min-h-0 flex-1">
          <Client top={schemTop} bottom={schemBottom}>
            <div className="flex h-full flex-col">
              <div className="min-h-0 flex-1 overflow-hidden">
                <Schematic />
              </div>
              <div className="flex h-px shrink-0 pl-1">
                <div className="w-[66px] bg-[#696969]" />
                <div className="ml-[43px] w-[318px] bg-black" />
                <div className="flex-1 bg-[#e3e3e3]" />
              </div>
            </div>
          </Client>
        </div>
      </section>
    </main>
  )
}
